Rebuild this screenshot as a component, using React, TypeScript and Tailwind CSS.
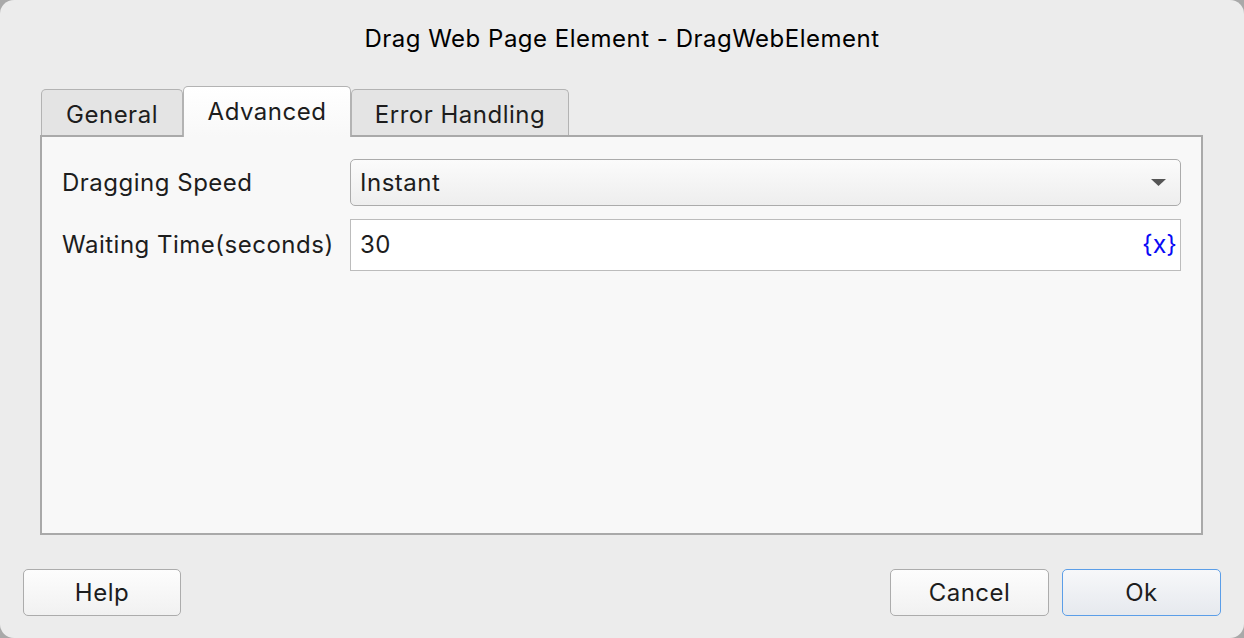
export default function App() {
  return (
    <div className="w-[1244px] h-[638px] bg-[#a9a9a9] font-['Inter','Liberation_Sans',sans-serif] text-[#1d1d1d] tracking-[0.5px]">
      <div className="w-full h-full rounded-[14px] bg-[#ececec] flex flex-col">
        {/* Title */}
        <div className="h-[84px] flex items-start justify-center pt-[25px] text-[24px] text-black leading-[28px]">
          Drag Web Page Element - DragWebElement
        </div>

        {/* Tabs */}
        <div className="flex items-end h-[51px] pl-[41px]">
          <div className="w-[142px] h-[46px] border-[1.5px] border-b-0 border-[#b3b3b3] rounded-t-[5px] bg-[#e4e4e4] flex items-center justify-center text-[24px] pt-[5px]">
            General
          </div>
          <div className="w-[168px] h-[51px] border-[1.5px] border-b-0 border-[#b3b3b3] rounded-t-[5px] bg-gradient-to-b from-[#ffffff] to-[#f8f8f8] flex items-center justify-center text-[24px] -mb-[2px] relative z-10 pb-[1px]">
            Advanced
          </div>
          <div className="w-[218px] h-[46px] border-[1.5px] border-b-0 border-[#b3b3b3] rounded-t-[5px] bg-[#e4e4e4] flex items-center justify-center text-[24px] pt-[5px]">
            Error Handling
          </div>
        </div>

        {/* Panel */}
        <div className="mx-[40px] mr-[41px] h-[400px] border-2 border-[#a9a9a9] bg-[#f8f8f8] px-[20px] pt-[22px] flex flex-col gap-[13px]">
          <div className="flex items-center">
            <div className="w-[288px] text-[24px]">Dragging Speed</div>
            <div className="flex-1 h-[47px] rounded-[5px] border-[1.5px] border-[#ababab] bg-gradient-to-b from-[#fbfbfb] to-[#eeeeee] flex items-center justify-between pl-[9px] pr-[14px] text-[24px]">
              <span>Instant</span>
              <svg width="15" height="8" viewBox="0 0 15 8">
                <polygon points="0,0 15,0 7.5,7" fill="#555555" />
              </svg>
            </div>
          </div>
          <div className="flex items-center">
            <div className="w-[288px] text-[24px]">Waiting Time(seconds)</div>
            <div className="flex-1 h-[52px] border border-[#bcbcbc] bg-white flex items-center justify-between pl-[9px] pr-[3px] text-[24px]">
              <span>30</span>
              <span className="text-[#0a0af5] text-[25px] tracking-normal">{"{x}"}</span>
            </div>
          </div>
        </div>

        {/* Buttons */}
        <div className="flex items-center justify-between px-[23px] mt-[34px]">
          <button className="w-[158px] h-[47px] rounded-[5px] border-[1.5px] border-[#acacac] bg-gradient-to-b from-[#fdfdfd] to-[#f1f1f1] text-[24px]">
            Help
          </button>
          <div className="flex gap-[13px]">
            <button className="w-[159px] h-[47px] rounded-[5px] border-[1.5px] border-[#acacac] bg-gradient-to-b from-[#fdfdfd] to-[#f1f1f1] text-[24px]">
              Cancel
            </button>
            <button className="w-[159px] h-[47px] rounded-[5px] border-[1.5px] border-[#5b9ee8] bg-gradient-to-b from-[#f7f8fa] to-[#e6e9ee] text-[24px]">
              Ok
            </button>
          </div>
        </div>
      </div>
    </div>
  );
}
